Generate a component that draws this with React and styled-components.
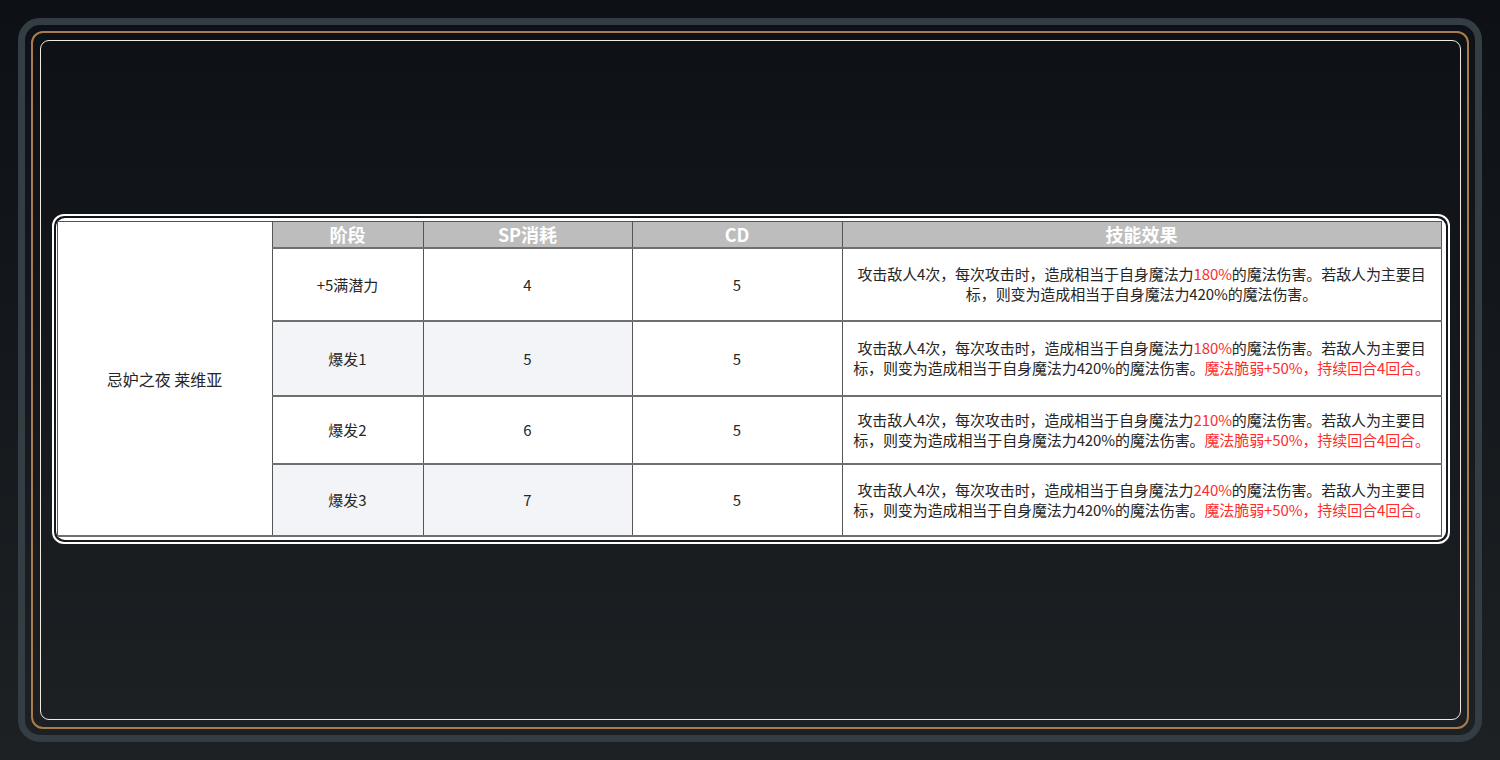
import React from 'react';
import styled, {createGlobalStyle} from "styled-components";

const GlobalStyle = createGlobalStyle`
  html, body {
    margin: 0;
    padding: 0;
  }
  body {
    background: linear-gradient(180deg, #0d1015 0%, #15181c 50%, #1e2124 100%);
    font-family: "Noto Sans CJK SC", "Noto Sans", sans-serif;
    height: 760px;
    overflow: hidden;
  }
`
const Frame = styled.div`
  margin: 18px;
  height: 724px;
  box-sizing: border-box;
  border: 7px solid #343d44;
  border-radius: 22px;
  padding: 6px;
`
const GoldRing = styled.div`
  height: 100%;
  box-sizing: border-box;
  border: 2px solid #a87d4b;
  border-radius: 12px;
  padding: 7px 6px 7px 7px;
`
const Inner = styled.div`
  height: 100%;
  box-sizing: border-box;
  border: 1px solid #ecebe4;
  border-radius: 9px;
  padding: 0 10px;
  display: flex;
  align-items: center;
  justify-content: center;
`
const Panel = styled.div`
  width: 1398px;
  box-sizing: border-box;
  border: 2px solid #ffffff;
  border-radius: 12px;
  padding: 2px;
  margin-top: -3px;
`
const Sheet = styled.div`
  background: #ffffff;
  border-radius: 9px;
  padding: 3px 4px 3px 1px;
`
const Table = styled.table`
  width: 1384px;
  table-layout: fixed;
  border-collapse: collapse;
  border: 1px solid #555;
  color: #262626;
  font-size: 15px;
`
const HeadCell = styled.th`
  background: #bdbdbd;
  color: #fff;
  font-size: 18px;
  font-weight: 700;
  height: 25px;
  padding: 0;
  line-height: 25px;
  border-left: 1px solid #555;
  border-bottom: 2px solid #6f6f6f;
`
const NameCell = styled.td`
  background: #fff;
  text-align: center;
  font-size: 16px;
  padding: 0;
  padding-top: 2px;
  border: 1px solid #555;
  border-bottom: 2px solid #6f6f6f;
`
const Cell = styled.td`
  background: ${props => props.$shade ? "#f3f4f8" : "#fff"};
  text-align: center;
  padding: 0;
  height: ${props => props.$h}px;
  border-left: 1px solid #555;
  border-bottom: 2px solid #6f6f6f;
  white-space: nowrap;
`
const Effect = styled.td`
  background: #fff;
  text-align: center;
  padding: 0;
  line-height: 20px;
  letter-spacing: -0.1px;
  border-left: 1px solid #555;
  border-bottom: 2px solid #6f6f6f;
  white-space: nowrap;
`
const Red = styled.span`
  color: #ff2d2d;
`

const rows = [
    {stage: "+5满潜力", sp: 4, cd: 5, pct: "180%", extra: false, h: 71},
    {stage: "爆发1", sp: 5, cd: 5, pct: "180%", extra: true, h: 73, shade: true},
    {stage: "爆发2", sp: 6, cd: 5, pct: "210%", extra: true, h: 66},
    {stage: "爆发3", sp: 7, cd: 5, pct: "240%", extra: true, h: 70, shade: true},
];

const App = () => {
    return (
        <>
            <GlobalStyle/>
            <Frame>
                <GoldRing>
                    <Inner>
                        <Panel>
                            <Sheet>
                                <Table>
                                    <colgroup>
                                        <col style={{width: 215}}/>
                                        <col style={{width: 151}}/>
                                        <col style={{width: 209}}/>
                                        <col style={{width: 210}}/>
                                        <col style={{width: 599}}/>
                                    </colgroup>
                                    <tbody>
                                    <tr>
                                        <NameCell rowSpan={5}>忌妒之夜 莱维亚</NameCell>
                                        <HeadCell>阶段</HeadCell>
                                        <HeadCell>SP消耗</HeadCell>
                                        <HeadCell>CD</HeadCell>
                                        <HeadCell>技能效果</HeadCell>
                                    </tr>
                                    {rows.map((row) => (
                                        <tr key={row.stage}>
                                            <Cell $h={row.h} $shade={row.shade}>{row.stage}</Cell>
                                            <Cell $h={row.h} $shade={row.shade}>{row.sp}</Cell>
                                            <Cell $h={row.h}>{row.cd}</Cell>
                                            <Effect>
                                                攻击敌人4次，每次攻击时，造成相当于自身魔法力<Red>{row.pct}</Red>的魔法伤害。若敌人为主要目
                                                <br/>
                                                标，则变为造成相当于自身魔法力420%的魔法伤害。
                                                {row.extra && <Red>魔法脆弱+50%，持续回合4回合。</Red>}
                                            </Effect>
                                        </tr>
                                    ))}
                                    </tbody>
                                </Table>
                            </Sheet>
                        </Panel>
                    </Inner>
                </GoldRing>
            </Frame>
        </>
    );
};

export default App;
